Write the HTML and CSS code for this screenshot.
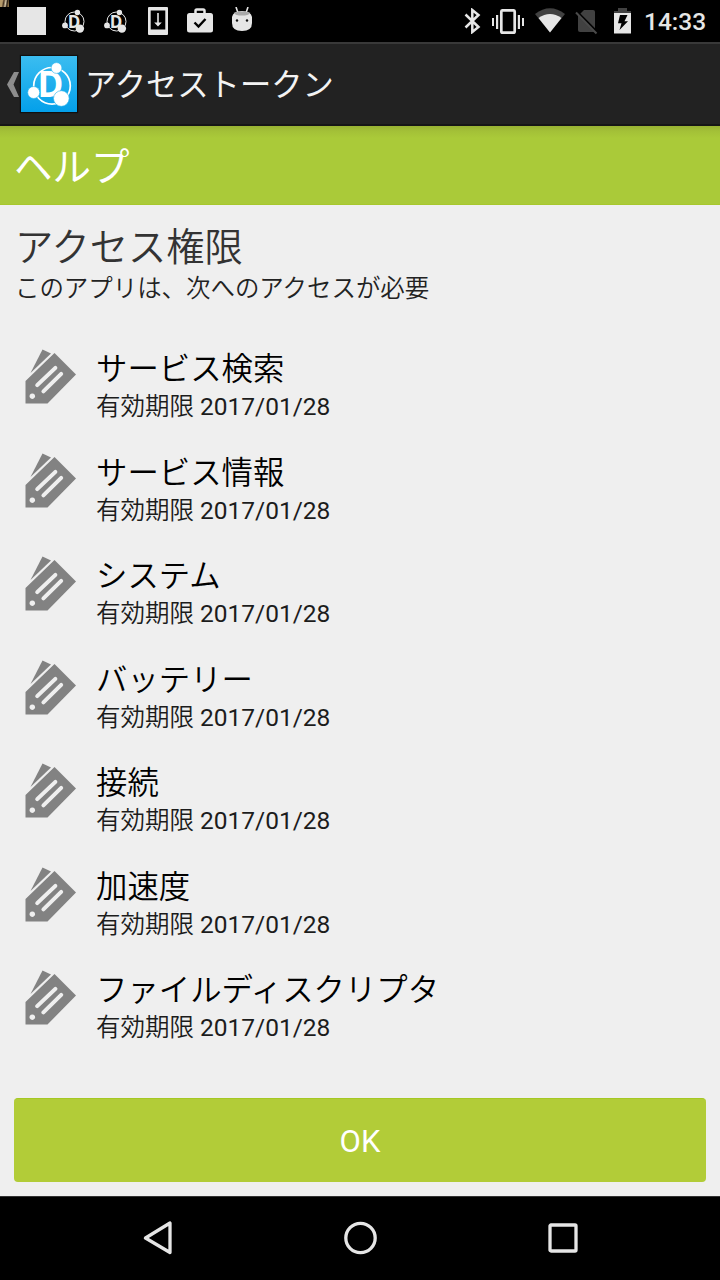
FILE: index.html
```html
<!DOCTYPE html>
<html lang="ja">
<head>
<meta charset="utf-8">
<title>アクセストークン</title>
<link rel="stylesheet" href="styles.css">
</head>
<body>
<svg class="defs" aria-hidden="true">
  <symbol id="tag" viewBox="0 0 52 56">
    <path d="M17.500.5 26 4.500 5.500 24z"/>
    <path fill-rule="evenodd" d="M29.500 4 51 25.500 22.500 54.500H.5V32zM29 17.400 10.800 34.800a1.900 1.900 0 0 0 2.800 2.800L31.800 20.200a1.900 1.900 0 0 0-2.800-2.800zM34.800 23.400 17 41a1.900 1.900 0 0 0 2.800 2.800L37.600 26.200a1.900 1.900 0 0 0-2.800-2.800zM7.300 44.400a2.800 2.800 0 1 0 .01 0z"/>
  </symbol>
</svg>
<div class="screen">
  <header class="status">
    <span class="speck"></span>
    <div class="status-left">
      <span class="blank"></span>
      <svg class="connect" width="24" height="24"><circle cx="12.500" cy="12.500" r="9.500" fill="none" stroke="currentColor"/><text x="5.700" y="18.500" class="connect-letter">D</text><circle cx="15.400" cy="3.500" r="2.700"/><circle cx="3" cy="16.400" r="2.900"/><circle cx="17.900" cy="19.600" r="4.200"/></svg>
      <svg class="connect" width="24" height="24"><circle cx="12.500" cy="12.500" r="9.500" fill="none" stroke="currentColor"/><text x="5.700" y="18.500" class="connect-letter">D</text><circle cx="15.400" cy="3.500" r="2.700"/><circle cx="3" cy="16.400" r="2.900"/><circle cx="17.900" cy="19.600" r="4.200"/></svg>
      <svg class="download" width="20" height="28"><path fill-rule="evenodd" d="M1 0h18a1 1 0 0 1 1 1v26a1 1 0 0 1-1 1H1a1 1 0 0 1-1-1V1a1 1 0 0 1 1-1zM2.700 3.500v19h14.600v-19z"/><path d="M9.200 6h1.600v9.500h3L10 19.600l-3.800-4.100h3z"/></svg>
      <svg class="bag" width="26" height="25"><path d="M8.500 6V2.800Q8.500 1.500 9.800 1.500h6.400q1.300 0 1.300 1.300V6" fill="none" stroke="currentColor" stroke-width="2.500"/><rect y="5" width="26" height="19.500" rx="2.500"/><path d="m7.500 14.500 4 4 7-7.500" fill="none" stroke="#000" stroke-width="2.400"/></svg>
      <svg class="robot" width="22" height="25" viewBox="0 0 22 25"><path d="m5 0 2 6M17 0l-2 6" stroke="currentColor" stroke-width="1.600"/><path d="M1 10Q2 4 11 4T21 10V16Q21 24 11 24T1 16z"/><ellipse cx="11" cy="6.500" rx="7.500" ry="2" fill="#aaa"/><circle cx="6" cy="13.500" r="1.200" fill="#111"/><circle cx="16" cy="13.500" r="1.200" fill="#111"/></svg>
    </div>
    <div class="status-right">
      <svg class="bluetooth" width="17" height="26"><path fill="none" stroke="currentColor" stroke-width="2.500" d="m1.500 6.500 13 12.500-6.200 5V2L14.500 7l-13 12.500"/></svg>
      <svg class="vibrate" width="32" height="26"><rect x="9.300" y="1.300" width="13.400" height="22.400" rx="1.500" fill="none" stroke="currentColor" stroke-width="2.700"/><path d="M0 9h2v8H0zm4-3h2.200v14H4zm21.800 0H28v14h-2.200zM30 9h2v8h-2z"/></svg>
      <svg class="wifi" width="32" height="25"><path fill="#414141" d="M1 6Q16-5.500 31 6L16 24.500z"/><path d="M4.500 10Q16 2 27.500 10L16 24.500z"/></svg>
      <svg class="nosim" width="23" height="26"><path fill="#414141" d="M9 1h9q2 0 2 2v19q0 1-1 1H5q-2 0-2-2V7z"/><path d="m0 1 23 23" stroke="#000" stroke-width="2.500"/><path d="m1 3.500 20.500 21" stroke="#4a4a4a" stroke-width="2"/></svg>
      <svg class="battery" width="17" height="26"><path fill="#414141" d="M4 0h9v3h4v4H0V3h4z"/><path d="M0 5h17v20.500H0z"/><path fill="#000" d="M6 7h7.500l-3 6.300H14L5.500 22l2-6.800H4z"/></svg>
      <span class="clock">14:33</span>
    </div>
  </header>
  <nav class="appbar">
    <svg class="back" width="13" height="25"><path d="M7 0h5L6.500 12.500 12 25H7L0 12.500z"/></svg>
    <svg class="logo" width="56" height="56">
      <defs><linearGradient id="sky" x2="0" y2="1"><stop stop-color="#3bbdf0"/><stop offset="1" stop-color="#04a0ea"/></linearGradient></defs>
      <rect width="56" height="56" fill="url(#sky)"/>
      <circle cx="31" cy="29.800" r="18.300" fill="none" stroke="#fff" stroke-width="1.700"/>
      <text x="16.500" y="41" class="logo-letter">D</text>
      <g fill="#fff" stroke="#27b3ee" stroke-width=".6"><circle cx="35.500" cy="12" r="5.400"/><circle cx="12.700" cy="36.500" r="6"/><circle cx="40.300" cy="42.500" r="7.800"/></g>
    </svg>
    <h1 class="app-title">アクセストークン</h1>
  </nav>
  <div class="help">ヘルプ</div>
  <main class="content">
    <h2 class="heading">アクセス権限</h2>
    <p class="lead">このアプリは、次へのアクセスが必要</p>
    <ul class="list">
      <li class="row"><svg class="tag"><use href="#tag"/></svg><div><div class="name">サービス検索</div><div class="expiry">有効期限 <span class="date">2017/01/28</span></div></div></li>
      <li class="row"><svg class="tag"><use href="#tag"/></svg><div><div class="name">サービス情報</div><div class="expiry">有効期限 <span class="date">2017/01/28</span></div></div></li>
      <li class="row"><svg class="tag"><use href="#tag"/></svg><div><div class="name">システム</div><div class="expiry">有効期限 <span class="date">2017/01/28</span></div></div></li>
      <li class="row"><svg class="tag"><use href="#tag"/></svg><div><div class="name">バッテリー</div><div class="expiry">有効期限 <span class="date">2017/01/28</span></div></div></li>
      <li class="row"><svg class="tag"><use href="#tag"/></svg><div><div class="name">接続</div><div class="expiry">有効期限 <span class="date">2017/01/28</span></div></div></li>
      <li class="row"><svg class="tag"><use href="#tag"/></svg><div><div class="name">加速度</div><div class="expiry">有効期限 <span class="date">2017/01/28</span></div></div></li>
      <li class="row"><svg class="tag"><use href="#tag"/></svg><div><div class="name">ファイルディスクリプタ</div><div class="expiry">有効期限 <span class="date">2017/01/28</span></div></div></li>
    </ul>
    <button class="ok">OK</button>
  </main>
  <footer class="navbar">
    <svg width="30" height="34"><path d="M27 2v29.500L2.500 17z"/></svg>
    <svg width="34" height="34"><circle cx="16.500" cy="17" r="14.700"/></svg>
    <svg width="30" height="30"><rect x="2" y="2" width="26" height="26" rx="1"/></svg>
  </footer>
</div>
</body>
</html>
```
FILE: styles.css
```css
* { box-sizing: border-box; }
body { margin: 0; background: #efefef; font-family: Roboto, "Noto Sans CJK JP", sans-serif; }
h1, h2, p, ul { margin: 0; padding: 0; font-weight: 400; }
.defs { position: absolute; width: 0; height: 0; }
.screen { width: 720px; height: 1280px; display: flex; flex-direction: column; overflow: hidden; }

.status { position: relative; height: 42px; flex: none; display: flex; justify-content: space-between; background: #000; color: #e6e6e6; }
.status svg { display: block; flex: none; fill: currentColor; }
.speck { position: absolute; left: 0; top: 0; width: 9px; height: 7px; background: linear-gradient(100deg, #b59a6a 25%, #4a3623 40%, #d8c9a8 60%, #2c2017 75%, #a98a50); }
.status-left { display: flex; align-items: flex-start; padding-left: 17px; }
.blank { width: 29px; height: 28px; margin-top: 7px; background: #e6e6e6; }
.connect { margin: 9px 2px 0 16px; }
.connect + .connect { margin-right: 0; }
.connect-letter { font: 700 17px "Open Sans", sans-serif; }
.download { margin: 7px 0 0 20px; }
.bag { margin: 8px 0 0 19px; }
.robot { margin: 7px 0 0 18px; }
.status-right { display: flex; align-items: flex-start; padding-right: 14px; }
.bluetooth { margin-top: 8px; }
.vibrate { margin: 9px 0 0 11px; }
.wifi { margin: 8px 0 0 10px; }
.nosim { margin: 9px 0 0 9px; }
.battery { margin: 8px 0 0 16px; }
.clock { margin-left: 13px; width: 62px; font-size: 24.500px; font-weight: 500; line-height: 44px; white-space: nowrap; }

.appbar { height: 84px; flex: none; display: flex; align-items: center; padding-left: 7px; background: #222; border-top: 2px solid #393939; border-bottom: 2px solid #161616; }
.back { fill: #8d8d8d; }
.logo { margin-left: 1px; box-shadow: 0 0 1px 1px #101010; }
.logo-letter { font: 700 35px "Open Sans", sans-serif; fill: #fff; }
.app-title { margin-left: 8px; padding-top: 3px; color: #f3f3f3; font-size: 31.300px; line-height: 46px; }

.help { height: 79px; flex: none; padding: 3px 0 0 14px; color: #fff; font-size: 38.500px; line-height: 78px; background: linear-gradient(#98b233, #a3c037 5px, #aaca39 12px, #aaca39 78px, #a4c520 79px); }
.content { flex: 1; min-height: 0; padding: 18px 14px 14px; display: flex; flex-direction: column; }
.heading { color: #333; font-size: 38.300px; font-weight: 350; line-height: 50px; padding-left: 1px; }
.lead { color: #222; font-size: 24.450px; font-weight: 350; line-height: 32px; padding-left: 1px; }
.list { list-style: none; margin-top: 28px; }
.row { display: flex; align-items: flex-start; height: 103.500px; padding: 16px 0 0 11px; }
.tag { width: 52px; height: 56px; margin: 0 19px 0 0; flex: none; fill: #828282; }
.name { color: #000; font-size: 31.400px; font-weight: 350; line-height: 42px; }
.expiry { color: #1c1c1c; font-size: 24.500px; font-weight: 350; line-height: 32px; }
.date { font-weight: 400; }
.ok { height: 84px; margin: auto 0 0; flex: none; padding: 2px 0 0; border: 0; border-top: 1px solid #a5c823; border-radius: 4px; background: #b2cc38; color: #fff; font: 400 31px Roboto, sans-serif; }
.navbar { height: 84px; flex: none; display: flex; align-items: center; justify-content: space-between; padding: 0 142px 2px 143px; background: #000; border-top: 1px solid #333; }
.navbar svg { fill: none; stroke: #e6e6e6; stroke-width: 3.300; stroke-linejoin: round; }
```
